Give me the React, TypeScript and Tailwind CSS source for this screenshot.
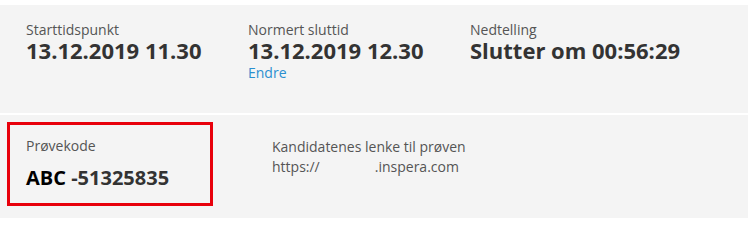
import React from "react";

export default function App() {
  const font = { fontFamily: '"Open Sans", "Noto Sans", sans-serif' };
  return (
    <div className="w-[748px] h-[219px] bg-white pt-[5px]" style={font}>
      <div className="h-[108px] bg-[#f4f4f4] flex pl-[26px] pt-[16px]">
        <div className="w-[222px]">
          <div className="text-[14px] leading-[18px] text-[#555]">Starttidspunkt</div>
          <div className="text-[22px] leading-[22px] font-bold text-[#333]">13.12.2019 11.30</div>
        </div>
        <div className="w-[222px]">
          <div className="text-[14px] leading-[18px] text-[#555]">Normert sluttid</div>
          <div className="text-[22px] leading-[22px] font-bold text-[#333]">13.12.2019 12.30</div>
          <div className="text-[14px] leading-[20px] mt-[2px] text-[#2a8fd0]">Endre</div>
        </div>
        <div>
          <div className="text-[14px] leading-[18px] text-[#555]">Nedtelling</div>
          <div className="text-[22px] leading-[22px] font-bold text-[#333]">Slutter om 00:56:29</div>
        </div>
      </div>
      <div className="h-[2px] bg-white" />
      <div className="h-[103px] bg-[#f4f4f4] flex items-start pl-[7px] pt-[7px]">
        <div className="w-[206px] h-[84px] border-[3px] border-[#e8000b] pl-[16px] pt-[12px]">
          <div className="text-[14px] leading-[18px] text-[#555]">Prøvekode</div>
          <div className="text-[20px] leading-[26px] font-bold mt-[10px] text-[#333]">
            <span className="text-black">ABC</span> -51325835
          </div>
        </div>
        <div className="ml-[59px] pt-[15px]">
          <div className="text-[14px] leading-[20px] text-[#555]">Kandidatenes lenke til prøven</div>
          <div className="text-[14px] leading-[20px] text-[#555] flex">
            <span>https://</span>
            <span className="ml-[55px]">.inspera.com</span>
          </div>
        </div>
      </div>
    </div>
  );
}
